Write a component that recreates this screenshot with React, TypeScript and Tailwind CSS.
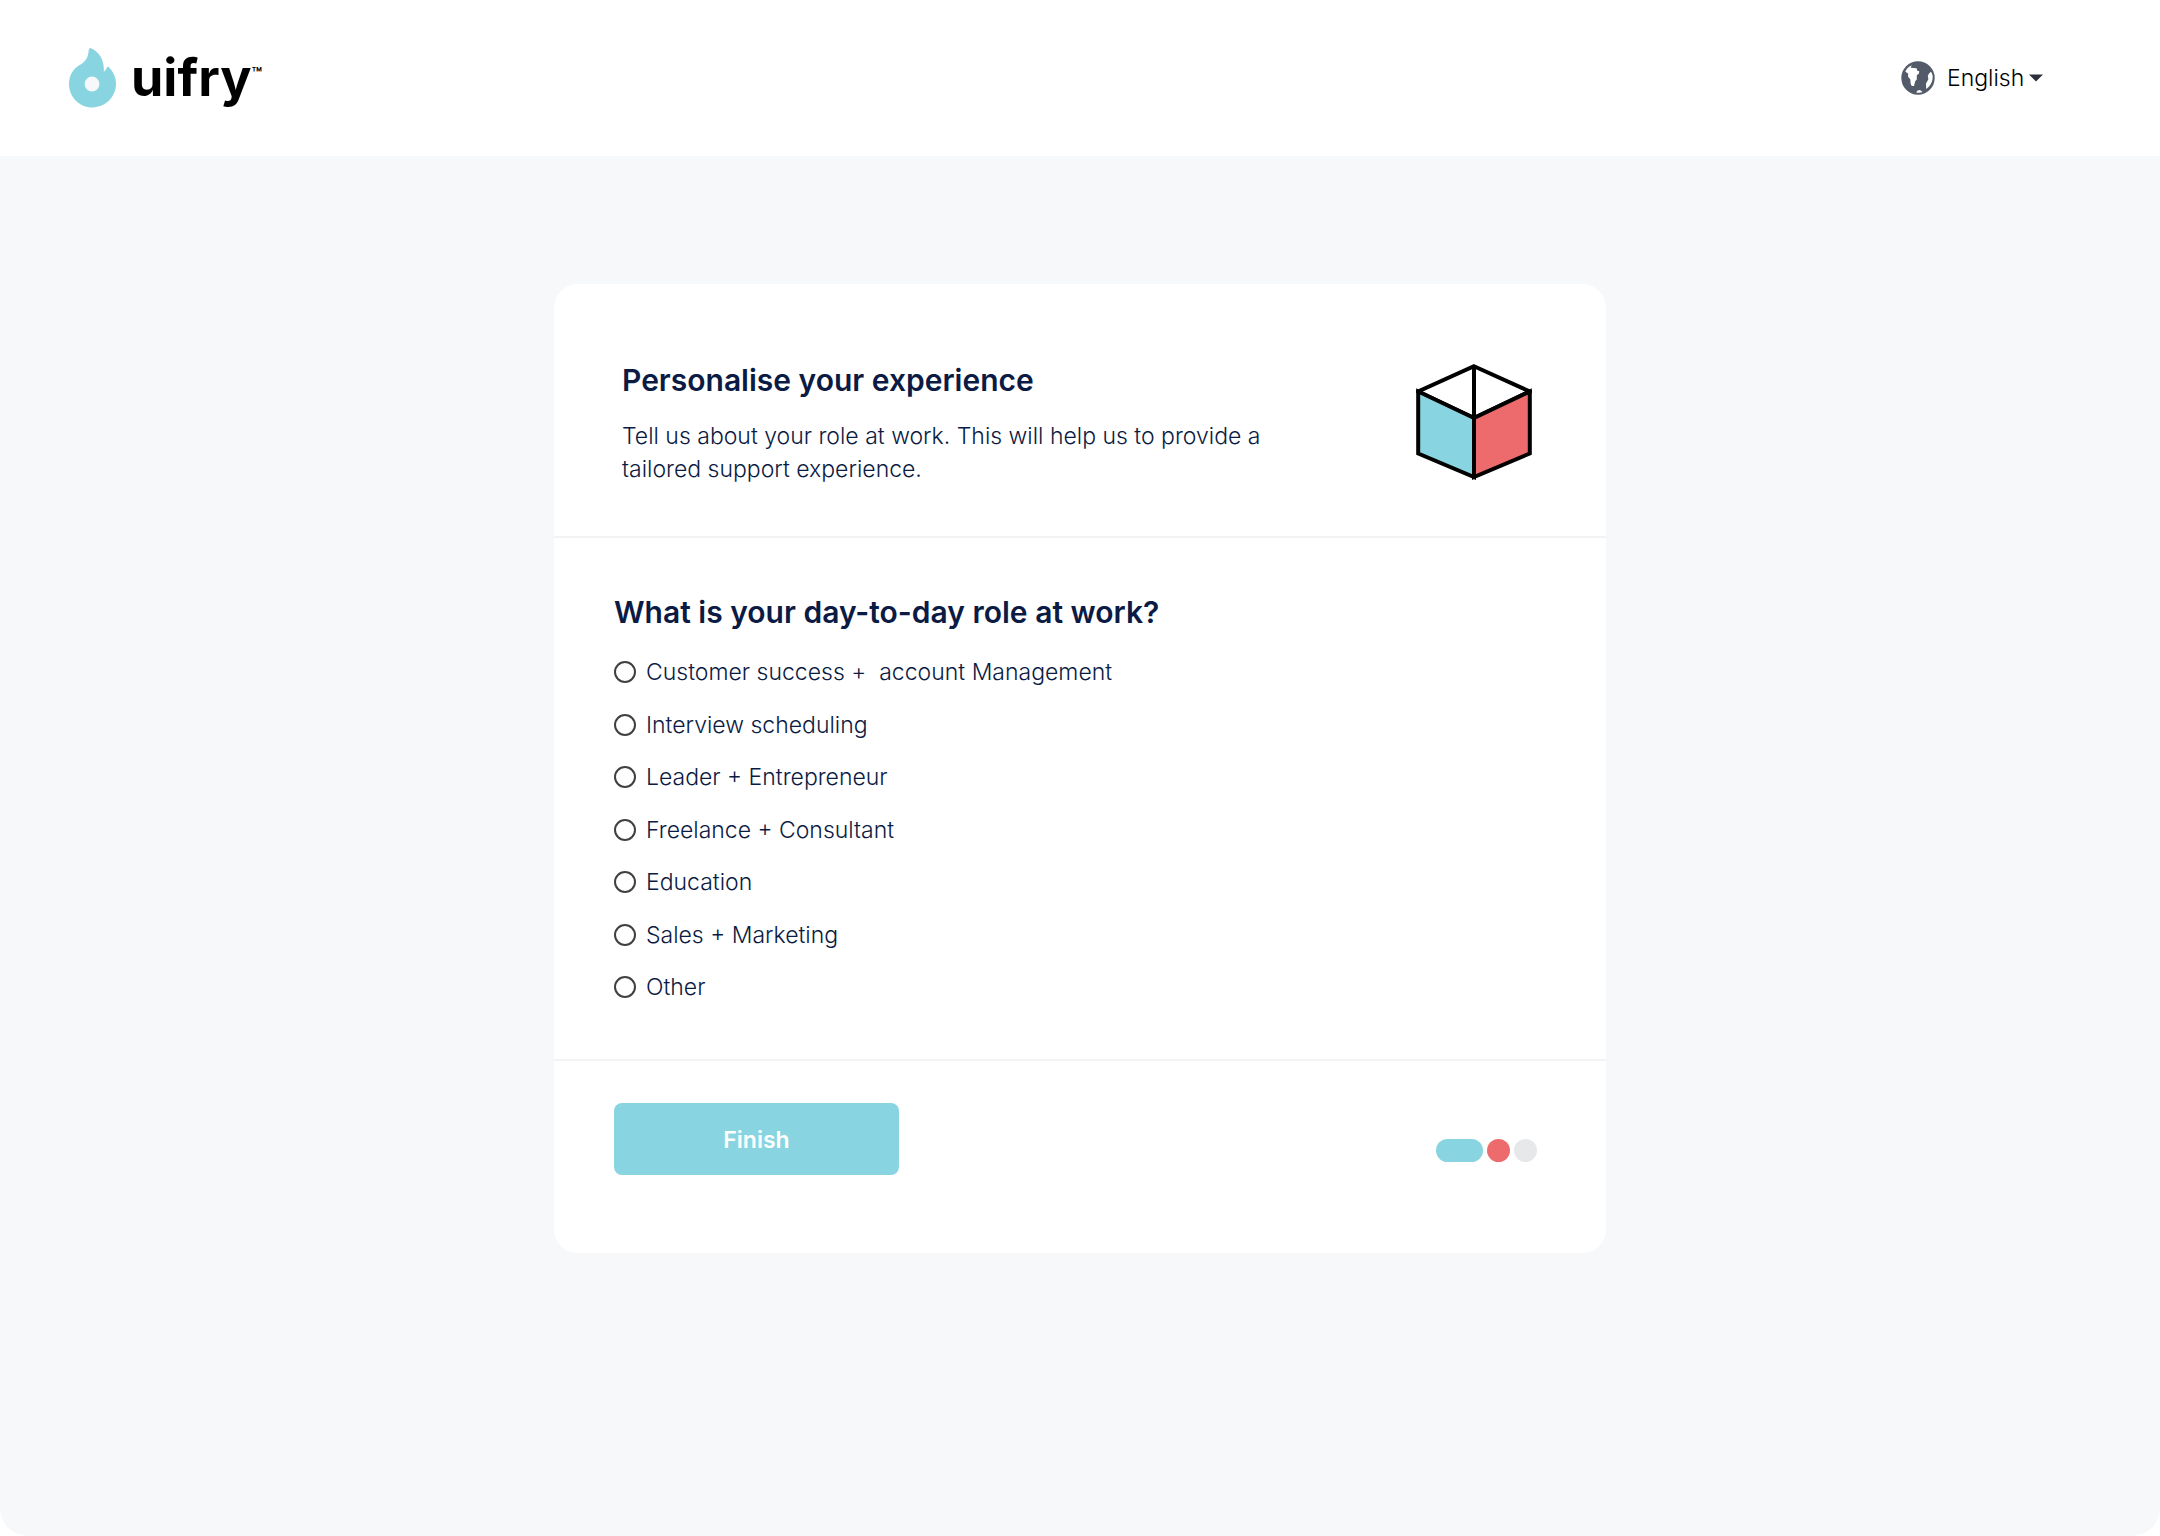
import * as React from "react";

const ROLES = [
    "Customer success +  account Management",
    "Interview scheduling",
    "Leader + Entrepreneur",
    "Freelance + Consultant",
    "Education",
    "Sales + Marketing",
    "Other",
];

function Logo() {
    return (
        <a href="#" className="flex items-center" aria-label="uifry home">
            <svg viewBox="0 0 48 60" className="w-12 h-15" aria-hidden="true">
                <path
                    fill="#88d5e1"
                    d="M20.6 .6C20.8 .1 21.4 0 22 .2C30 3.4 35.5 12 34.9 23.8C36.4 22.6 37.2 21 37.9 19.5C38.3 18.7 39.2 18.6 39.9 19.3C44.3 23.8 47 29.3 47 35.6C47 49 36.5 59.4 23.5 59.4S0 49 0 35.9C0 27 4.6 19.6 12.5 16C17.7 12.8 19.6 7 19.6 2.6C19.7 1.8 20.3 1.2 20.6 .6Z"
                />
                <circle cx="23" cy="36" r="7.4" fill="#f7f8fa" />
            </svg>
            <span className="ml-3.5 text-[52px] leading-[60px] font-bold text-black">uifry</span>
            <span className="mb-2 text-[17px] leading-4 font-semibold text-black">™</span>
        </a>
    );
}

function GlobeIcon() {
    return (
        <svg viewBox="0 0 34 34" className="w-[34px] h-[34px]" aria-hidden="true">
            <circle cx="17" cy="17" r="16.7" fill="#535b6b" />
            <path
                fill="#fff"
                d="M4.3 10.8C5 8.5 7.5 5.5 10.8 4.3L9.6 6.8L15.6 7.2L16.3 9.8L18.2 10.2L18 12.6L15.8 14.2L15.8 18.5L14.2 20.2L13 24.9L10.8 25L9.6 22.8L9.4 18.6L7 15.6L7.2 12.6Z"
            />
            <path
                fill="#fff"
                d="M30 10.8L28 12.6L26.8 15L27.4 18.2L25 22.5L25.2 28C29.5 25.5 32.2 20 31.6 14.6C31.3 13 30.8 12 30 10.8Z"
            />
            <path fill="#fff" d="M15.2 31.4L16.6 29.5L19 29L20.6 30.3L21.4 31.2C19.5 31.8 17 31.8 15.2 31.4Z" />
        </svg>
    );
}

function CubeIcon() {
    return (
        <svg viewBox="0 0 116 116" className="w-[116px] h-[116px] shrink-0" aria-hidden="true">
            <g stroke="#000" strokeWidth="4" strokeLinejoin="miter">
                <path fill="#fff" d="M58 2.2L113.8 27.5L58 54L2.2 27.5Z" />
                <path fill="#88d5e1" d="M2.2 27.5L58 54V113L2.2 89.5Z" />
                <path fill="#ed6b6d" d="M113.8 27.5L58 54V113L113.8 89.5Z" />
                <path fill="none" d="M58 2.2V54" />
            </g>
        </svg>
    );
}

function LanguageSelect() {
    return (
        <label className="flex items-center">
            <GlobeIcon />
            <select
                aria-label="Language"
                className="ml-3 appearance-none bg-transparent text-[23px] leading-8 font-light text-black"
            >
                <option>English</option>
            </select>
            <svg viewBox="0 0 14 8" className="ml-1 w-3.5 h-2" aria-hidden="true">
                <path fill="#2b303b" d="M0 .5H14L7 7.5Z" />
            </svg>
        </label>
    );
}

export default function App() {
    const [role, setRole] = React.useState("");

    return (
        <div className="min-h-screen flex flex-col bg-white font-['Inter',sans-serif] text-[#0b1b43]">
            <header className="flex items-center justify-between pl-[69px] pr-[117px] py-12">
                <Logo />
                <LanguageSelect />
            </header>

            <main className="flex-1 px-6 pt-32 pb-16 rounded-b-[28px] bg-[#f7f8fa]">
                <form
                    className="mx-auto max-w-[1052px] rounded-3xl bg-white"
                    onSubmit={(e) => e.preventDefault()}
                >
                    <section className="flex items-start justify-between pl-[68px] pr-[74px] pt-20 pb-[50px] border-b-2 border-[#f3f3f4]">
                        <div className="max-w-[640px]">
                            <h1 className="text-[30px] leading-8 font-semibold">Personalise your experience</h1>
                            <p className="mt-6 text-[23px] leading-[33px] font-light">
                                Tell us about your role at work. This will help us to provide a tailored support
                                experience.
                            </p>
                        </div>
                        <CubeIcon />
                    </section>

                    <fieldset className="px-[60px] pt-14 pb-[58px] border-b-2 border-[#f3f3f4]">
                        <legend className="float-left text-[30px] leading-9 font-semibold">
                            What is your day-to-day role at work?
                        </legend>
                        <div className="clear-both pt-7">
                            <div className="flex flex-col justify-between min-h-[343px]">
                                {ROLES.map((item) => (
                                    <label
                                        key={item}
                                        className="flex items-center gap-2.5 text-[23px] leading-7 font-light whitespace-pre"
                                    >
                                        <input
                                            type="radio"
                                            name="role"
                                            value={item}
                                            checked={role === item}
                                            onChange={() => setRole(item)}
                                            className="appearance-none w-[22px] h-[22px] rounded-full border-2 border-black/75 checked:border-[6px]"
                                        />
                                        {item}
                                    </label>
                                ))}
                            </div>
                        </div>
                    </fieldset>

                    <footer className="flex items-start justify-between pl-[60px] pr-[69px] pt-[42px] pb-[78px]">
                        <button
                            type="submit"
                            className="w-[285px] h-[72px] pt-0.5 rounded-lg bg-[#88d5e1] text-[23px] font-semibold text-white"
                        >
                            Finish
                        </button>
                        <div className="mt-9 flex items-center gap-1">
                            <span className="w-[47px] h-[23px] rounded-full bg-[#88d5e1]" />
                            <span className="w-[23px] h-[23px] rounded-full bg-[#ed6b6d]" />
                            <span className="w-[23px] h-[23px] rounded-full bg-[#e7e8ea]" />
                        </div>
                    </footer>
                </form>
            </main>
        </div>
    );
}
